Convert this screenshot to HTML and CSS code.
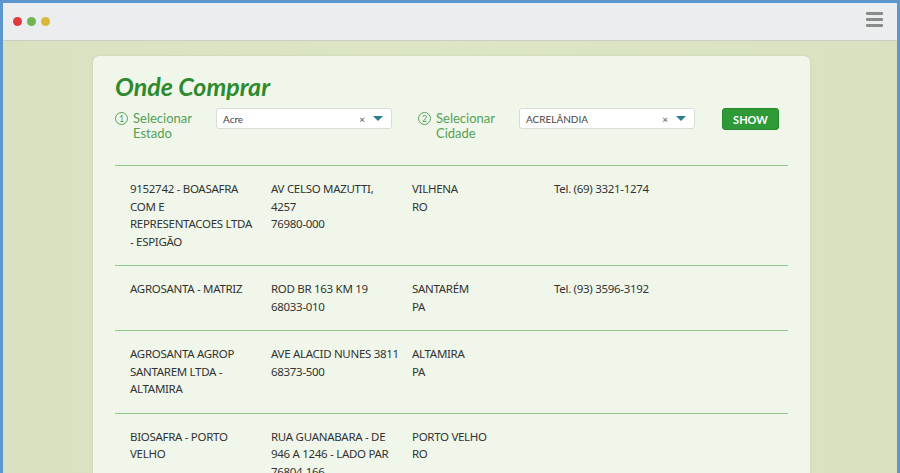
FILE: index.html
```html
<!DOCTYPE html>
<html lang="pt">
<head>
<meta charset="utf-8">
<title>Onde Comprar</title>
<link rel="stylesheet" href="styles.css">
</head>
<body>
<div class="frame">
  <header class="chrome">
    <div class="dots">
      <span class="dot red"></span>
      <span class="dot green"></span>
      <span class="dot yellow"></span>
    </div>
    <div class="burger"><span></span><span></span><span></span></div>
  </header>
  <main class="stage">
    <section class="card">
      <h1 class="title">Onde Comprar</h1>
      <div class="filters">
        <label class="step">
          <span class="num">1</span>
          <span class="lbl">Selecionar<br>Estado</span>
        </label>
        <div class="select">
          <span class="val">Acre</span>
          <span class="clear">×</span>
          <span class="caret"></span>
        </div>
        <label class="step step2">
          <span class="num">2</span>
          <span class="lbl">Selecionar<br>Cidade</span>
        </label>
        <div class="select">
          <span class="val">ACRELÂNDIA</span>
          <span class="clear">×</span>
          <span class="caret"></span>
        </div>
        <button class="show">SHOW</button>
      </div>
      <div class="list">
        <div class="row">
          <div>9152742 - BOASAFRA COM E REPRESENTACOES LTDA - ESPIGÃO</div>
          <div>AV CELSO MAZUTTI, 4257<br>76980-000</div>
          <div>VILHENA<br>RO</div>
          <div>Tel. (69) 3321-1274</div>
        </div>
        <div class="row">
          <div>AGROSANTA - MATRIZ</div>
          <div>ROD BR 163 KM 19<br>68033-010</div>
          <div>SANTARÉM<br>PA</div>
          <div>Tel. (93) 3596-3192</div>
        </div>
        <div class="row">
          <div>AGROSANTA AGROP SANTAREM LTDA - ALTAMIRA</div>
          <div>AVE ALACID NUNES 3811<br>68373-500</div>
          <div>ALTAMIRA<br>PA</div>
          <div></div>
        </div>
        <div class="row">
          <div>BIOSAFRA - PORTO VELHO</div>
          <div>RUA GUANABARA - DE 946 A 1246 - LADO PAR<br>76804-166</div>
          <div>PORTO VELHO<br>RO</div>
          <div></div>
        </div>
      </div>
    </section>
  </main>
</div>
</body>
</html>
```

FILE: styles.css
```css
* { box-sizing: border-box; }
html, body { margin: 0; padding: 0; height: 100%; overflow: hidden; }
body { font-family: Lato, "Noto Sans", sans-serif; background: #5b97cc; }
.frame {
  height: 100%;
  margin: 3px 3px 0 3px;
  display: flex;
  flex-direction: column;
  background: linear-gradient(90deg, #d9e1c1 0%, #dce6c5 50%, #d9e2c0 100%);
  overflow: hidden;
}
.chrome {
  height: 38px;
  flex: none;
  background: #ebedee;
  border-bottom: 1px solid #c9d0bf;
  display: flex;
  align-items: center;
  justify-content: space-between;
  padding: 0 14px 0 10px;
}
.dots { display: flex; gap: 5px; margin-top: -1px; }
.dot { width: 9px; height: 9px; border-radius: 50%; display: block; }
.red { background: #e03a3a; }
.green { background: #6db552; }
.yellow { background: #dcb83a; }
.burger { display: flex; flex-direction: column; gap: 3px; width: 17px; margin-top: -4px; }
.burger span { height: 3px; background: #8a8a8a; display: block; border-radius: 1px; }
.stage { flex: 1; padding: 15px 87px 0 90px; }
.card {
  background: #f0f7ea;
  border-radius: 6px 6px 0 0;
  height: 100%;
  padding: 14px 22px 0 22px;
  box-shadow: 0 0 2px rgba(120,140,90,0.25);
}
.title {
  margin: 0;
  font-family: Lato, "Noto Sans", sans-serif;
  font-size: 25px;
  font-weight: 700;
  font-style: italic;
  color: #2d8a2e;
  line-height: 32px;
}
.filters {
  display: flex;
  align-items: flex-start;
  margin-top: 5px;
  height: 59px;
  border-bottom: 1px solid #8fc98e;
}
.step { display: flex; gap: 5px; color: #55a055; font-size: 13px; line-height: 15px; width: 101px; margin-top: 4px; }
.step .num {
  flex: none;
  width: 13px; height: 13px;
  margin-top: 1px;
  border: 1px solid #5a9f5a;
  border-radius: 50%;
  font-size: 9px;
  line-height: 11px;
  text-align: center;
}
.step2 { margin-left: 26px; width: 101px; }
.select {
  width: 176px;
  height: 21px;
  background: #fff;
  border: 1px solid #d8dcd6;
  border-radius: 3px;
  display: flex;
  align-items: center;
  padding: 0 8px 0 6px;
  font-size: 10px;
  color: #444;
  margin-top: 1px;
}
.select .val { flex: 1; }
.select .clear { color: #777; font-size: 10px; font-weight: 700; margin-right: 8px; }
.select .caret {
  width: 0; height: 0;
  border-left: 5px solid transparent;
  border-right: 5px solid transparent;
  border-top: 5px solid #2d7f8c;
}
.show {
  margin-left: 27px;
  margin-top: 1px;
  width: 57px;
  height: 22px;
  background: #2e9a37;
  border: 1px solid #268a2e;
  border-radius: 3px;
  color: #fff;
  font-family: Lato, sans-serif;
  font-weight: 700;
  font-size: 11px;
  padding: 0;
}
.row {
  display: grid;
  grid-template-columns: 141px 141px 142px 200px;
  padding: 14px 15px 15px;
  border-bottom: 1px solid #8fc98e;
  font-family: "Noto Sans", sans-serif;
  font-size: 11.5px;
  letter-spacing: -0.3px;
  line-height: 17.5px;
  color: #333;
}
.row > div { padding-right: 12px; }
.row > div:first-child { padding-right: 15px; }
```
